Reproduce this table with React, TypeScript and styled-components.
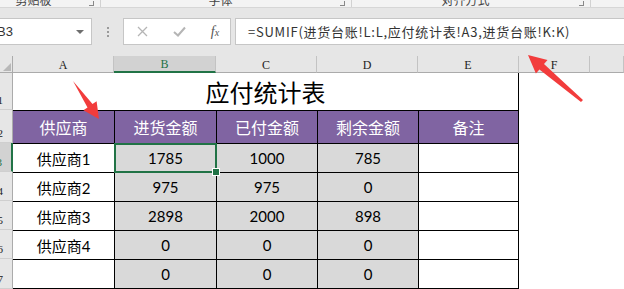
import styled, { createGlobalStyle } from "styled-components";

const GlobalStyle = createGlobalStyle`
  html, body {
    margin: 0;
    padding: 0;
    background: #ffffff;
    overflow: hidden;
  }
  * {
    box-sizing: border-box;
  }
`;

const CJK = `"Noto Sans CJK SC", "Noto Sans", sans-serif`;
const NUM = `Lato, "Noto Sans CJK SC", sans-serif`;

const Page = styled.div`
  position: relative;
  width: 624px;
  height: 289px;
  overflow: hidden;
  font-family: ${CJK};
`;

// ribbon strip, only the bottom of the group labels is visible
const Ribbon = styled.div`
  display: flex;
  height: 8px;
  overflow: hidden;
  background: #f3f3f3;
  border-bottom: 1px solid #d6d6d6;
`;

const RibbonGroup = styled.div<{ $w: number; $shift?: number }>`
  display: flex;
  align-items: flex-end;
  flex: none;
  width: ${(p) => p.$w}px;
  margin-left: ${(p) => p.$shift || 0}px;
  height: 8px;
  border-right: 1px solid #d2d2d2;
`;

const RibbonLabel = styled.span`
  flex: 1;
  text-align: center;
  font-size: 12px;
  line-height: 12px;
  margin-bottom: 2px;
  color: #444;
`;

const Launcher = styled.span`
  width: 5px;
  height: 5px;
  margin: 0 6px 2px 0;
  border-right: 1px solid #888;
  border-bottom: 1px solid #888;
`;

const FormulaArea = styled.div`
  display: flex;
  align-items: flex-start;
  height: 48px;
  padding-top: 10px;
  background: #e6e6e6;
`;

const NameBox = styled.div`
  display: flex;
  align-items: center;
  justify-content: space-between;
  flex: none;
  width: 102px;
  height: 27px;
  margin-left: -10px;
  padding: 0 7px 0 6px;
  background: #fff;
  border: 1px solid #c6c6c6;
  font-family: "Liberation Sans", sans-serif;
  font-size: 13px;
  color: #333;
`;

const DropArrow = styled.span`
  width: 0;
  height: 0;
  border-left: 4px solid transparent;
  border-right: 4px solid transparent;
  border-top: 4px solid #6e6e6e;
`;

const Dots = styled.div`
  display: flex;
  flex-direction: column;
  align-items: center;
  justify-content: center;
  gap: 2px;
  flex: none;
  width: 31px;
  height: 27px;
  span {
    width: 2px;
    height: 2px;
    background: #9a9a9a;
  }
`;

const FxBox = styled.div`
  display: grid;
  grid-template-columns: 36px 38px 34px;
  align-items: center;
  justify-items: center;
  flex: none;
  width: 108px;
  height: 27px;
  background: #fff;
  border: 1px solid #c6c6c6;
`;

const FxText = styled.span`
  font-family: "Liberation Serif", serif;
  font-style: italic;
  font-size: 14px;
  color: #555;
  sub {
    font-size: 10px;
    vertical-align: 0;
  }
`;

const FormulaInput = styled.div`
  display: flex;
  align-items: center;
  flex: 1;
  height: 27px;
  margin: 0 -10px 0 4px;
  padding-left: 12px;
  background: #fff;
  border: 1px solid #c6c6c6;
  font-family: "Noto Sans CJK SC", sans-serif;
  font-size: 13px;
  letter-spacing: 0.75px;
  color: #333;
  white-space: nowrap;
`;

const Sheet = styled.div`
  display: grid;
  grid-template-columns: 13px 101px 102px 101px 101px 101px 71px 1fr;
  grid-template-rows: 17px 37px 33px 29px 29px 29px 29px 30px;
  background: #fff;
`;

const Corner = styled.div`
  position: relative;
  background: #e6e6e6;
  border-right: 1px solid #ababab;
  border-bottom: 1px solid #ababab;
  &::after {
    content: "";
    position: absolute;
    right: 1px;
    bottom: 1px;
    border-left: 8px solid transparent;
    border-bottom: 8px solid #b8b8b8;
  }
`;

const ColHead = styled.div<{ $active?: boolean }>`
  display: flex;
  align-items: center;
  justify-content: center;
  padding-top: 2px;
  background: ${(p) => (p.$active ? "#d2d2d2" : "#e6e6e6")};
  color: ${(p) => (p.$active ? "#217346" : "#222")};
  border-right: 1px solid #c3c3c3;
  border-bottom: ${(p) => (p.$active ? "2px solid #217346" : "1px solid #ababab")};
  font-family: "Liberation Serif", serif;
  font-size: 12px;
`;

const RowHead = styled.div<{ $active?: boolean }>`
  display: flex;
  align-items: flex-end;
  justify-content: flex-end;
  overflow: hidden;
  padding: 0 9px 3px 0;
  background: ${(p) => (p.$active ? "#d2d2d2" : "#e6e6e6")};
  color: ${(p) => (p.$active ? "#217346" : "#222")};
  border-right: ${(p) => (p.$active ? "2px solid #217346" : "1px solid #ababab")};
  border-bottom: 1px solid #cfcfcf;
  font-family: "Liberation Serif", serif;
  font-size: 11px;
  line-height: 11px;
`;

const Title = styled.div`
  grid-column: span 5;
  display: flex;
  align-items: center;
  justify-content: center;
  border-right: 1px solid #000;
  font-size: 24px;
  color: #000;
`;

const Blank = styled.div``;

const HeadCell = styled.div<{ $first?: boolean; $last?: boolean }>`
  display: flex;
  align-items: center;
  justify-content: center;
  background: #8064a2;
  color: #fff;
  font-size: 16px;
  border-top: 1px solid #000;
  border-left: ${(p) => (p.$first ? "none" : "1px solid #000")};
  border-right: ${(p) => (p.$last ? "1px solid #000" : "none")};
`;

const Cell = styled.div<{ $grey?: boolean; $first?: boolean; $last?: boolean; $bottom?: boolean }>`
  display: flex;
  align-items: center;
  justify-content: center;
  background: ${(p) => (p.$grey ? "#d9d9d9" : "#fff")};
  color: #000;
  font-family: ${NUM};
  font-size: 15px;
  border-top: 1px solid #000;
  border-left: ${(p) => (p.$first ? "none" : "1px solid #000")};
  border-right: ${(p) => (p.$last ? "1px solid #000" : "none")};
  border-bottom: ${(p) => (p.$bottom ? "1px solid #000" : "none")};
`;

const Selected = styled(Cell)`
  position: relative;
  &::after {
    content: "";
    position: absolute;
    top: -1px;
    left: -1px;
    right: -1px;
    bottom: -1px;
    border: 2px solid #217346;
  }
  &::before {
    content: "";
    position: absolute;
    right: -4px;
    bottom: -4px;
    width: 6px;
    height: 6px;
    background: #217346;
    border: 1px solid #fff;
    z-index: 2;
  }
`;

const Overlay = styled.svg`
  position: absolute;
  top: 0;
  left: 0;
  pointer-events: none;
`;

const cols = ["A", "B", "C", "D", "E", "F", ""];

const rows = [
  { name: "供应商1", a: "1785", b: "1000", c: "785" },
  { name: "供应商2", a: "975", b: "975", c: "0" },
  { name: "供应商3", a: "2898", b: "2000", c: "898" },
  { name: "供应商4", a: "0", b: "0", c: "0" },
  { name: "", a: "0", b: "0", c: "0" },
];

const heads = ["供应商", "进货金额", "已付金额", "剩余金额", "备注"];

export default function App() {
  return (
    <Page>
      <GlobalStyle />
      <Ribbon>
        <RibbonGroup $w={123} $shift={-22}>
          <RibbonLabel>剪贴板</RibbonLabel>
          <Launcher />
        </RibbonGroup>
        <RibbonGroup $w={251}>
          <RibbonLabel>字体</RibbonLabel>
          <Launcher />
        </RibbonGroup>
        <RibbonGroup $w={239}>
          <RibbonLabel>对齐方式</RibbonLabel>
          <Launcher />
        </RibbonGroup>
      </Ribbon>
      <FormulaArea>
        <NameBox>
          <span>B3</span>
          <DropArrow />
        </NameBox>
        <Dots>
          <span />
          <span />
          <span />
        </Dots>
        <FxBox>
          <svg width="11" height="11" viewBox="0 0 11 11">
            <path d="M1 1 L10 10 M10 1 L1 10" stroke="#b5b5b5" strokeWidth="1.3" />
          </svg>
          <svg width="13" height="11" viewBox="0 0 13 11">
            <path d="M1 6 L5 9.5 L12 1.5" stroke="#b5b5b5" strokeWidth="2" fill="none" />
          </svg>
          <FxText>
            f<sub>x</sub>
          </FxText>
        </FxBox>
        <FormulaInput>=SUMIF(进货台账!L:L,应付统计表!A3,进货台账!K:K)</FormulaInput>
      </FormulaArea>
      <Sheet>
        <Corner />
        {cols.map((c, i) => (
          <ColHead key={i} $active={c === "B"}>
            {c}
          </ColHead>
        ))}

        <RowHead>1</RowHead>
        <Title>应付统计表</Title>
        <Blank />
        <Blank />

        <RowHead>2</RowHead>
        {heads.map((h, i) => (
          <HeadCell key={h} $first={i === 0} $last={i === 4}>
            {h}
          </HeadCell>
        ))}
        <Blank />
        <Blank />

        {rows.map((r, i) => {
          const bottom = i === rows.length - 1;
          return [
            <RowHead key={`h${i}`} $active={i === 0}>
              {i + 3}
            </RowHead>,
            <Cell key={`n${i}`} $first $bottom={bottom}>
              {r.name}
            </Cell>,
            i === 0 ? (
              <Selected key={`a${i}`} $grey>
                {r.a}
              </Selected>
            ) : (
              <Cell key={`a${i}`} $grey $bottom={bottom}>
                {r.a}
              </Cell>
            ),
            <Cell key={`b${i}`} $grey $bottom={bottom}>
              {r.b}
            </Cell>,
            <Cell key={`c${i}`} $grey $bottom={bottom}>
              {r.c}
            </Cell>,
            <Cell key={`d${i}`} $last $bottom={bottom} />,
            <Blank key={`f${i}`} />,
            <Blank key={`g${i}`} />,
          ];
        })}
      </Sheet>
      <Overlay width="624" height="289" viewBox="0 0 624 289">
        <polygon
          points="73,81 92.5,104.1 96.6,101.3 99,119 83.4,110.3 87.5,107.5"
          fill="#f23c3c"
        />
        <polygon
          points="583,100 544,64 547.5,59.9 528,55 535.9,73.5 539.4,69.4 581,102"
          fill="#f23c3c"
        />
      </Overlay>
    </Page>
  );
}
